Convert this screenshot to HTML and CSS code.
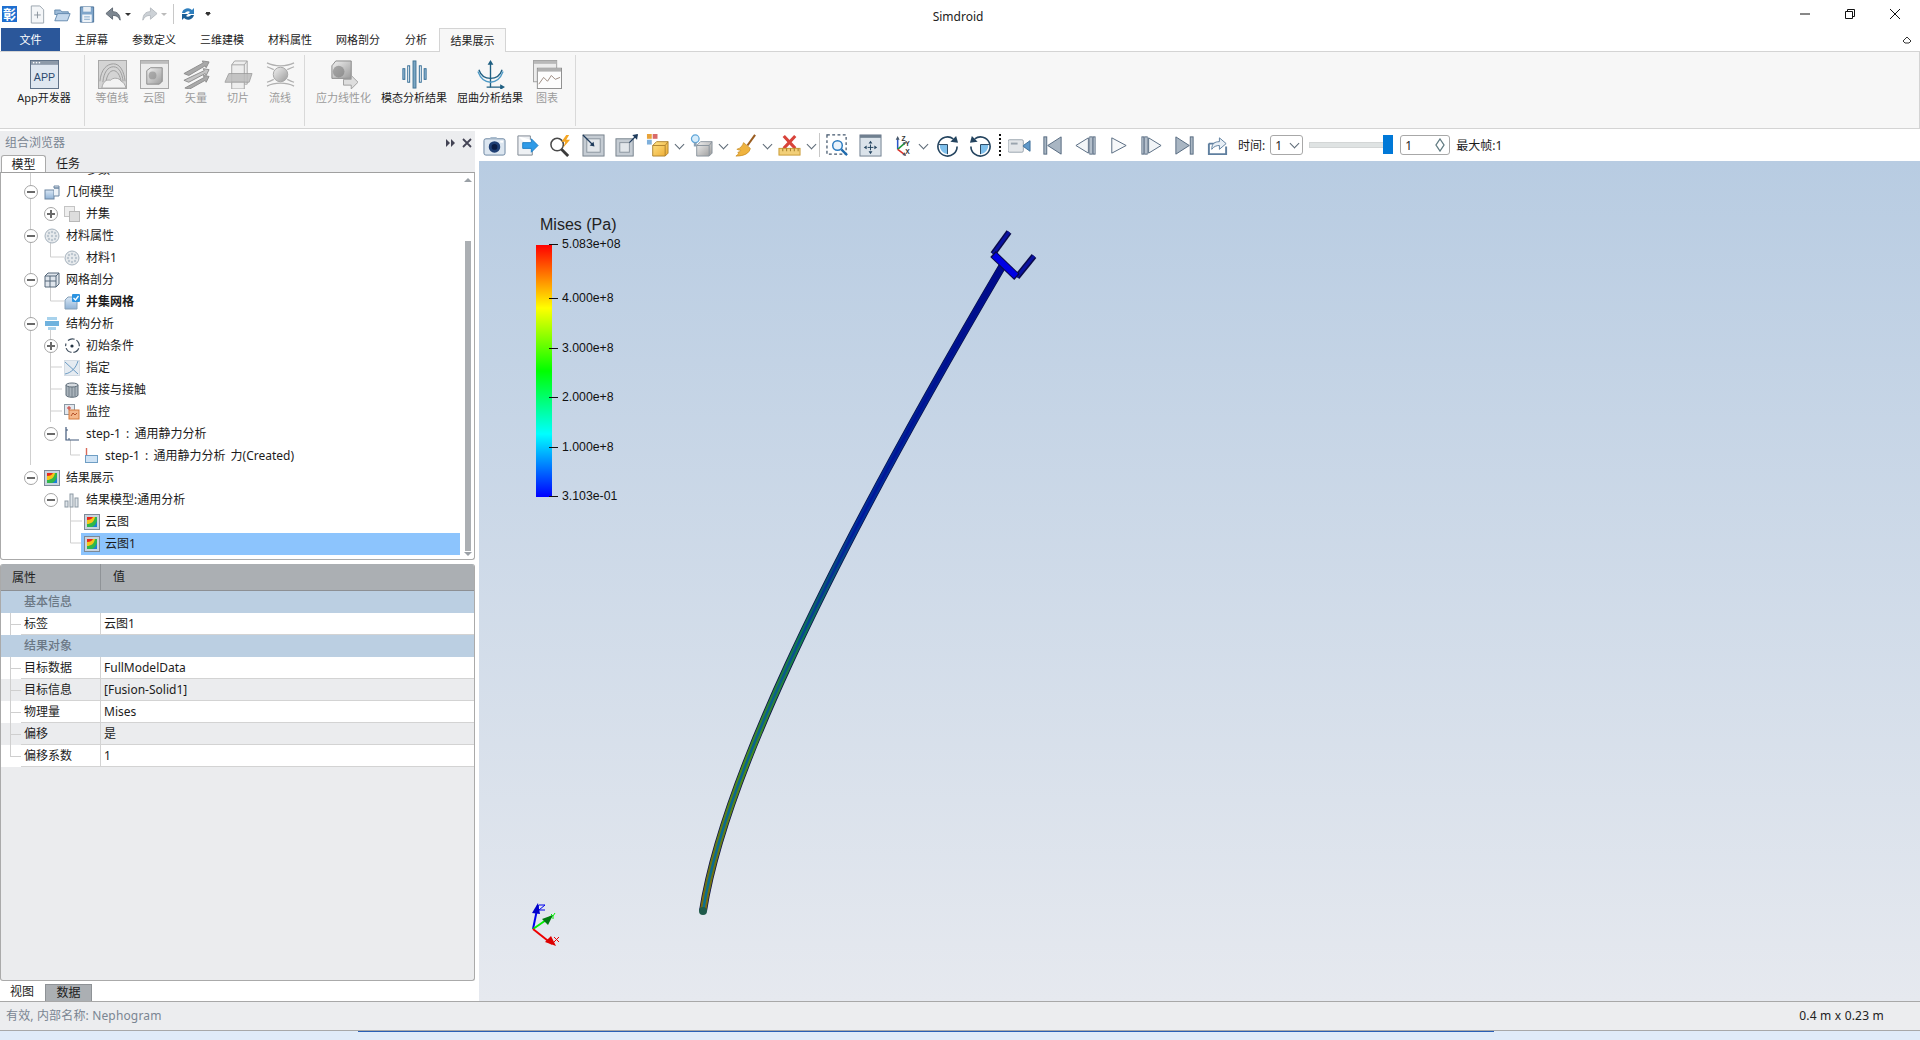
FILE: index.html
```html
<!DOCTYPE html>
<html lang="zh">
<head>
<meta charset="utf-8">
<title>Simdroid</title>
<link rel="stylesheet" href="styles.css">
</head>
<body>
<svg class="defs" xmlns="http://www.w3.org/2000/svg">
<defs>
<linearGradient id="gGrey" x1="0" y1="0" x2="1" y2="1"><stop offset="0" stop-color="#f2f2f2"/><stop offset="1" stop-color="#9a9a9a"/></linearGradient>
<linearGradient id="gBlue" x1="0" y1="0" x2="0" y2="1"><stop offset="0" stop-color="#dbe8f5"/><stop offset="1" stop-color="#8fb2d6"/></linearGradient>
<linearGradient id="gYel" x1="0" y1="0" x2="1" y2="1"><stop offset="0" stop-color="#ffe58a"/><stop offset="1" stop-color="#eda92e"/></linearGradient>
<linearGradient id="gBeam" gradientUnits="userSpaceOnUse" x1="0" y1="911" x2="0" y2="265"><stop offset="0" stop-color="#7a6a10"/><stop offset=".22" stop-color="#4a8a1c"/><stop offset=".42" stop-color="#107a50"/><stop offset=".6" stop-color="#00309a"/><stop offset="1" stop-color="#000a8a"/></linearGradient>
<linearGradient id="gBeamIn" gradientUnits="userSpaceOnUse" x1="0" y1="911" x2="0" y2="265"><stop offset="0" stop-color="#0b6f90"/><stop offset=".35" stop-color="#0a5f8a"/><stop offset=".6" stop-color="#00189e"/><stop offset="1" stop-color="#000a8a"/></linearGradient>
<linearGradient id="gRainbow" x1="0" y1="0" x2="0" y2="1"><stop offset="0" stop-color="#ff0000"/><stop offset=".25" stop-color="#ffff00"/><stop offset=".5" stop-color="#00ff00"/><stop offset=".75" stop-color="#00ffff"/><stop offset="1" stop-color="#0000ff"/></linearGradient>

<symbol id="q-new" viewBox="0 0 18 20"><path d="M3 1h9l4 4v14H3z" fill="#f4f6f8" stroke="#9aa4ae"/><path d="M9.500 7v7M6 10.500h7" stroke="#8a949e"/></symbol>
<symbol id="q-open" viewBox="0 0 20 20"><path d="M2 5h6l2 2h7v3H2z" fill="#9dbbd8" stroke="#5f86ab"/><path d="M2 17l3-8h14l-3 8z" fill="#c4d8ec" stroke="#5f86ab"/></symbol>
<symbol id="q-save" viewBox="0 0 18 20"><path d="M2 2h14v16H2z" fill="#7fa5ca" stroke="#4a7197"/><path d="M5 2h8v5H5z" fill="#e8eef4"/><path d="M4 10h10v8H4z" fill="#eef3f8"/><path d="M6 12.500h6M6 15h6" stroke="#7fa5ca"/></symbol>
<symbol id="q-undo" viewBox="0 0 18 18"><path d="M8 2L1 8l7 6v-4c4 0 6 1 8 5 0-6-3-9-8-9z" fill="#7d8791" stroke="#5d6771"/></symbol>
<symbol id="q-redo" viewBox="0 0 18 18"><path d="M10 2l7 6-7 6v-4c-4 0-6 1-8 5 0-6 3-9 8-9z" fill="#ccd1d6" stroke="#b5babf"/></symbol>
<symbol id="q-refresh" viewBox="0 0 18 18"><path d="M3 8a6 6 0 0 1 10-3l2-2v6H9l2-2a3.500 3.500 0 0 0-5 1z" fill="#2f7fbe"/><path d="M15 10a6 6 0 0 1-10 3l-2 2V9h6l-2 2a3.500 3.500 0 0 0 5-1z" fill="#1c5f96"/></symbol>

<symbol id="r-app" viewBox="0 0 30 30"><rect x=".5" y=".5" width="29" height="29" fill="#dfe7f0" stroke="#5c6f85"/><rect x="1" y="1" width="28" height="4" fill="#8d9aa9"/><rect x="3" y="2" width="1.500" height="1.500" fill="#fff"/><rect x="6" y="2" width="1.500" height="1.500" fill="#fff"/><rect x="9" y="2" width="1.500" height="1.500" fill="#fff"/><text x="15" y="22" class="apptxt">APP</text></symbol>
<symbol id="r-contour" viewBox="0 0 30 30"><rect x=".5" y=".5" width="29" height="29" fill="#d4d4d4" stroke="#a6a6a6"/><g fill="none" stroke="#9b9b9b"><path d="M2 22C3 10 9 4 16 4s11 8 12 18"/><path d="M5 23C6 13 10 7 16 7s9 7 10 15"/><path d="M8 24c1-8 4-13 8-13s7 5 8 12"/></g><path d="M4 29c1-7 5-9 9-8 2-3 9-3 11 1 3 1 4 4 5 7z" fill="#f2f2f2" stroke="#a6a6a6"/></symbol>
<symbol id="r-neph" viewBox="0 0 30 30"><rect x=".5" y=".5" width="29" height="29" fill="#ececec" stroke="#a6a6a6"/><rect x="1" y="1" width="28" height="3" fill="#bdbdbd"/><path d="M7 11l4-3h12v14l-3 3H7z" fill="url(#gGrey)" stroke="#8c8c8c"/><circle cx="13" cy="16" r="4" fill="#8a8a8a" opacity=".6"/></symbol>
<symbol id="r-vec" viewBox="0 0 30 30"><g fill="#a9a9a9" stroke="#8e8e8e"><path d="M2 14L22 3l-1-2 7 1-3 6-1-2L7 16z"/><path d="M2 21l21-10-1-2 6 1-3 6-1-2L7 23z" fill="#c4c4c4"/><path d="M3 29l20-11-1-2 6 1-3 6-1-2L8 30z"/></g></symbol>
<symbol id="r-slice" viewBox="0 0 30 30"><path d="M8 5l3-4h13v24H8z" fill="#ededed" stroke="#a6a6a6"/><path d="M8 5h13l3-4M21 5v20" fill="none" stroke="#a6a6a6"/><path d="M5 14h24l-3 9H1z" fill="#bcbcbc" opacity=".85" stroke="#989898"/><path d="M8 23h13v7H8z" fill="#ededed" stroke="#a6a6a6"/></symbol>
<symbol id="r-stream" viewBox="0 0 30 30"><circle cx="15" cy="15" r="7.500" fill="url(#gGrey)" stroke="#a6a6a6"/><g fill="none" stroke="#b0b0b0" stroke-width="1.300"><path d="M1 3c8 4 20 4 28 0"/><path d="M1 7c3 1 5 2 7 3M29 7c-3 1-5 2-7 3"/><path d="M1 27c8-4 20-4 28 0"/><path d="M1 23c3-1 5-2 7-3M29 23c-3-1-5-2-7-3"/></g></symbol>
<symbol id="r-lin" viewBox="0 0 30 30"><path d="M3 6l4-5h16v18H3z" fill="url(#gGrey)" stroke="#8a8a8a"/><circle cx="10" cy="12" r="6" fill="#777" opacity=".55"/><path d="M15 20h8v-4l7 7-7 7v-4h-8z" fill="#dedede" stroke="#a0a0a0"/></symbol>
<symbol id="r-modal" viewBox="0 0 30 30"><rect x="13.500" y="1" width="3" height="28" fill="#7aa6c4" stroke="#3f7396"/><rect x="3" y="9" width="2" height="11" fill="#a6c7de" stroke="#2f6a94"/><rect x="8" y="6" width="2" height="17" fill="#fff" stroke="#2f6a94"/><rect x="20" y="6" width="2" height="17" fill="#fff" stroke="#2f6a94"/><rect x="25" y="9" width="2" height="11" fill="#a6c7de" stroke="#2f6a94"/></symbol>
<symbol id="r-buck" viewBox="0 0 30 30"><g fill="none" stroke="#1f5f82" stroke-width="1.400"><path d="M15 4v24H28"/><path d="M11 28h4M3 10c2 6 7 9 12 9s10-3 12-9"/></g><path d="M2 12c3 8 8 11 13 11s10-3 13-11" fill="none" stroke="#4f9ac6" stroke-width="1.400"/><path d="M15 0l-3 5h6zM30 28l-5-3v6z" fill="#1f5f82"/></symbol>
<symbol id="r-chart" viewBox="0 0 30 30"><rect x=".5" y=".5" width="24" height="22" fill="#ececec" stroke="#a2a2a2"/><rect x="1" y="1" width="23" height="3" fill="#b9b9b9"/><rect x="4.500" y="8.500" width="25" height="21" fill="#fdfdfd" stroke="#8f8f8f"/><rect x="5" y="9" width="24" height="3" fill="#b0b0b0"/><path d="M6 25l5-7 4 4 4-6 4 4 5-2" fill="none" stroke="#9c8a80"/></symbol>

<symbol id="t-cam" viewBox="0 0 24 24"><rect x="1" y="5" width="22" height="17" rx="2" fill="#dce6f0" stroke="#6a84a0"/><path d="M7 5l1-2h6l1 2z" fill="#a9bbcd"/><circle cx="12" cy="13.500" r="6" fill="#1f3f74"/><circle cx="12" cy="13.500" r="3" fill="#0b1d44"/><rect x="18" y="7" width="3" height="2" fill="#fff"/></symbol>
<symbol id="t-exp" viewBox="0 0 24 24"><path d="M2 2h13v4M2 2v20h15v-5" fill="#eef1f4" stroke="#7d8791"/><path d="M7 9h9V5l7 7-7 7v-4H7z" fill="#2f9be8" stroke="#1f7fc6"/></symbol>
<symbol id="t-zf" viewBox="0 0 24 24"><circle cx="8.500" cy="11" r="6.500" fill="#fff" stroke="#4a4a4a" stroke-width="1.600"/><path d="M13 16l7 7" stroke="#3a3a3a" stroke-width="3"/><path d="M18 1l-5 7h4l-2 6 7-8h-4l3-5z" fill="#f5a623"/></symbol>
<symbol id="t-fit" viewBox="0 0 24 24"><rect x="1" y="1" width="22" height="22" fill="#c5ccd3" stroke="#76818c"/><rect x="5" y="5" width="14" height="14" fill="#e2e6ea" stroke="#8a949e"/><path d="M1 1l11 11" stroke="#1f3b5c" stroke-width="1.300"/><path d="M13 13l-5-1 4-4z" fill="#1f3b5c"/></symbol>
<symbol id="t-out" viewBox="0 0 24 24"><rect x="1" y="5" width="18" height="18" fill="#c5ccd3" stroke="#76818c"/><rect x="5" y="9" width="10" height="10" fill="#e2e6ea" stroke="#8a949e"/><path d="M15 9l8-8" stroke="#1f3b5c" stroke-width="1.300"/><path d="M24 0l-1 6-5-5z" fill="#1f3b5c"/></symbol>
<symbol id="t-cube" viewBox="0 0 24 24"><rect x="1" y="0" width="5" height="5" fill="#e8a33a"/><rect x="7" y="0" width="5" height="5" fill="#d86a6a"/><rect x="1" y="6" width="5" height="5" fill="#7fb0dc"/><path d="M7 12l4-4h12v12l-3 3H7z" fill="url(#gYel)" stroke="#b08430"/><path d="M7 12h13v11M20 12l3-4" fill="none" stroke="#b08430"/></symbol>
<symbol id="t-light" viewBox="0 0 24 24"><circle cx="5.500" cy="5" r="4" fill="#d6ecfb" stroke="#5ea5d8" stroke-width="1.300"/><rect x="4" y="9" width="3" height="4" fill="#8aa1b5"/><path d="M7 12l4-4h12v12l-3 3H7z" fill="url(#gGrey)" stroke="#8a949e"/><path d="M7 12h13v11M20 12l3-4" fill="none" stroke="#8a949e"/></symbol>
<symbol id="t-broom" viewBox="0 0 24 24"><path d="M22 1L14 12" stroke="#9a5d20" stroke-width="2.200"/><path d="M10 9l7 6c-1 5-6 8-15 8 3-2 3-3 2-4 2 0 3-1 3-2-2 0-3-1-4-1 4-1 6-4 7-7z" fill="#efb33f" stroke="#c78a1e" stroke-width=".8"/></symbol>
<symbol id="t-clear" viewBox="0 0 24 24"><path d="M6 2l12 13M18 2L6 15" stroke="#d8433a" stroke-width="3.200"/><rect x="1" y="15" width="22" height="7" fill="#f2cf78" stroke="#c99a34"/><path d="M5 15v3M9 15v3M13 15v3M17 15v3M21 15v3" stroke="#a07a24"/></symbol>
<symbol id="t-zbox" viewBox="0 0 24 24"><rect x="1" y="1" width="20" height="20" fill="none" stroke="#42566c" stroke-width="1.300" stroke-dasharray="3 2.500"/><circle cx="12" cy="12" r="5" fill="#eaf3fb" stroke="#2b7bc0" stroke-width="1.500"/><path d="M16 16l6 6" stroke="#1f6bad" stroke-width="2.400"/></symbol>
<symbol id="t-pan" viewBox="0 0 24 24"><rect x="1" y="1" width="22" height="22" fill="#dbe3ea" stroke="#6f7f8f"/><rect x="1" y="1" width="22" height="3" fill="#6f7f8f"/><path d="M12 7l-2 3h4zM12 21l-2-3h4zM5 14l3-2v4zM19 14l-3-2v4z" fill="#24445f"/><path d="M12 11v6M9 14h6" stroke="#24445f"/></symbol>
<symbol id="t-xyz" viewBox="0 0 24 24"><path d="M8 16V4" stroke="#2a55c8" stroke-width="1.600"/><path d="M8 16l8-7" stroke="#1f9a3a" stroke-width="1.600"/><path d="M8 16l8 6" stroke="#d8322a" stroke-width="1.600"/><path d="M8 2L6 6h4zM17 8l-4 1 2 2.500zM17 23l-2-4-2 3z" fill="#4a5a6a"/><text x="12" y="7" class="axtxt">Z</text><text x="16" y="12" class="axtxt">Y</text><text x="16" y="21" class="axtxt">X</text></symbol>
<symbol id="t-rot" viewBox="0 0 24 24"><path d="M18 5a10 10 0 1 0 4 8" fill="none" stroke="#24445f" stroke-width="1.700"/><path d="M23 9l-8-1 6-6z" fill="#24445f"/><path d="M4 11h8v10a9 9 0 0 1-8-10z" fill="#7fc0ec"/><path d="M3 11h9v10" fill="none" stroke="#24445f"/></symbol>
<symbol id="t-rotb" viewBox="0 0 24 24"><path d="M6 5a10 10 0 1 1-4 8" fill="none" stroke="#24445f" stroke-width="1.700"/><path d="M1 9l8-1-6-6z" fill="#24445f"/><path d="M20 11h-8v10a9 9 0 0 0 8-10z" fill="#7fc0ec"/><path d="M21 11h-9v10" fill="none" stroke="#24445f"/></symbol>
<symbol id="t-vid" viewBox="0 0 24 24"><rect x="0" y="6" width="16" height="13" rx="1.500" fill="#e3e6e9" stroke="#9aa4ae"/><rect x="3" y="9" width="7" height="2" fill="#9aa4ae"/><path d="M16 12l7-5v11l-7-5z" fill="#5f98c9" stroke="#3f6f98"/></symbol>
<symbol id="t-first" viewBox="0 0 24 24"><rect x="3" y="3" width="3" height="18" fill="#a9b6c3" stroke="#566a80"/><path d="M21 3v18L7 12z" fill="#a9b6c3" stroke="#566a80"/></symbol>
<symbol id="t-prev" viewBox="0 0 24 24"><path d="M15 4v16L2 12z" fill="#f2f5f8" stroke="#566a80"/><rect x="16.500" y="3" width="2.500" height="18" fill="#d8e0e8" stroke="#566a80"/><rect x="20" y="3" width="2" height="18" fill="#d8e0e8" stroke="#566a80"/></symbol>
<symbol id="t-play" viewBox="0 0 24 24"><path d="M5 4v16l15-8z" fill="#f6f8fa" stroke="#566a80"/></symbol>
<symbol id="t-next" viewBox="0 0 24 24"><rect x="2" y="3" width="2" height="18" fill="#d8e0e8" stroke="#566a80"/><rect x="5" y="3" width="2.500" height="18" fill="#d8e0e8" stroke="#566a80"/><path d="M9 4v16l13-8z" fill="#f2f5f8" stroke="#566a80"/></symbol>
<symbol id="t-last" viewBox="0 0 24 24"><path d="M3 3v18l14-9z" fill="#a9b6c3" stroke="#566a80"/><rect x="18" y="3" width="3" height="18" fill="#a9b6c3" stroke="#566a80"/></symbol>
<symbol id="t-share" viewBox="0 0 24 24"><path d="M3 10h7M3 10v11h18v-8" fill="none" stroke="#5f7f9f" stroke-width="2"/><path d="M6 16c0-6 3-8 8-8V4l7 6-7 6v-4c-3 0-6 1-8 4z" fill="#e7eef5" stroke="#5f7f9f"/></symbol>

<symbol id="n-geo" viewBox="0 0 16 16"><rect x="1" y="6" width="9" height="9" fill="url(#gBlue)" stroke="#6c86a2"/><path d="M10 4h5v8h-5M10 2h5v2h-5z" fill="#eef3f8" stroke="#6c86a2"/></symbol>
<symbol id="n-union" viewBox="0 0 16 16"><rect x=".5" y=".5" width="10" height="10" fill="#eee" stroke="#c4c4c4"/><rect x="5.500" y="5.500" width="10" height="10" fill="#ddd" stroke="#b8b8b8"/></symbol>
<symbol id="n-mat" viewBox="0 0 16 16"><circle cx="8" cy="8" r="7" fill="#e8ebee" stroke="#a6b2bd"/><g fill="#bcc6cf"><circle cx="5" cy="5" r="1.200"/><circle cx="8" cy="4" r="1.200"/><circle cx="11" cy="5" r="1.200"/><circle cx="4" cy="8" r="1.200"/><circle cx="8" cy="8" r="1.200"/><circle cx="12" cy="8" r="1.200"/><circle cx="5" cy="11" r="1.200"/><circle cx="8" cy="12" r="1.200"/><circle cx="11" cy="11" r="1.200"/></g></symbol>
<symbol id="n-mesh" viewBox="0 0 16 16"><path d="M1 4l3-3h11v11l-3 3H1z" fill="#dfe5ec" stroke="#56687a"/><path d="M1 4h11v11M12 4l3-3M1 9h11M6 4v11" fill="none" stroke="#56687a"/></symbol>
<symbol id="n-check" viewBox="0 0 16 16"><path d="M1 6l3-3h9v12H1z" fill="url(#gBlue)" stroke="#86a0b8"/><rect x="8" y="0" width="8" height="8" rx="1" fill="#2b93e0"/><path d="M9.500 4l2 2 3-4" fill="none" stroke="#fff" stroke-width="1.300"/></symbol>
<symbol id="n-struct" viewBox="0 0 16 16"><rect x="3" y="1" width="10" height="3" fill="#a8d2ec"/><rect x="1" y="5" width="14" height="5" fill="#6fb2de"/><rect x="4" y="11" width="8" height="3" fill="#a8d2ec"/></symbol>
<symbol id="n-init" viewBox="0 0 16 16"><path d="M4 2.500a6.800 6.800 0 1 1-2 3" fill="none" stroke="#3d4c5c" stroke-width="1.200" stroke-dasharray="7 2"/><circle cx="8" cy="8" r="1.600" fill="#243342"/></symbol>
<symbol id="n-assign" viewBox="0 0 16 16"><rect x=".5" y=".5" width="15" height="15" fill="#e5ebf1" stroke="#d4dce4"/><path d="M1 2l13 12M1 14C7 13 12 8 14 1" fill="none" stroke="#6c9cc4"/></symbol>
<symbol id="n-cyl" viewBox="0 0 16 16"><path d="M2 3v10c0 3 12 3 12 0V3z" fill="#a9b3bb" stroke="#5f6d79"/><ellipse cx="8" cy="3" rx="6" ry="2" fill="#d6dbe0" stroke="#5f6d79"/><path d="M5 5v9M8 5v10M11 5v9" stroke="#5f6d79" stroke-width=".7"/></symbol>
<symbol id="n-mon" viewBox="0 0 16 16"><rect x=".5" y=".5" width="10" height="10" fill="#e3e8ee" stroke="#8c98a4"/><rect x="5" y="6" width="10" height="9" fill="#f4b78a" stroke="#d57a3c"/><path d="M3 4h4M5 2v4" stroke="#c83a32"/><path d="M7 12l2-3 2 2 2-2" fill="none" stroke="#b5522a"/></symbol>
<symbol id="n-axis" viewBox="0 0 16 16"><path d="M2 1v13h13" fill="none" stroke="#41597a" stroke-width="1.200"/><path d="M2 4h2M5 14v-2" stroke="#41597a"/></symbol>
<symbol id="n-force" viewBox="0 0 16 16"><rect x="1.500" y="7.500" width="12" height="7" fill="#cfe3f5" stroke="#6f9ec4"/><path d="M2.500 0v7" stroke="#d86a5a" stroke-width="1.400"/></symbol>
<symbol id="n-res" viewBox="0 0 16 16"><rect x=".5" y=".5" width="15" height="15" fill="#c9d4df" stroke="#7d8a97"/><rect x="3" y="3" width="10" height="10" fill="#e8261c"/><path d="M3 13V6c3 0 5-1 6-3h4v10z" fill="#f5c518"/><path d="M3 13v-3c4 0 7-2 8-7h2v10z" fill="#2fb84a"/><path d="M8 13c3-1 4-4 5-6v6z" fill="#1c7fd6"/></symbol>
<symbol id="n-bars" viewBox="0 0 16 16"><rect x="1" y="9" width="3" height="6" fill="#dfe5ea" stroke="#8d99a4"/><rect x="6" y="2" width="3" height="13" fill="#dfe5ea" stroke="#8d99a4"/><rect x="11" y="6" width="3" height="9" fill="#dfe5ea" stroke="#8d99a4"/></symbol>
</defs>
</svg>

<div class="app">
  <header class="titlebar">
    <div class="quick">
      <span class="logo">彰</span>
      <svg class="q q1"><use href="#q-new"/></svg>
      <svg class="q"><use href="#q-open"/></svg>
      <svg class="q"><use href="#q-save"/></svg>
      <svg class="q q-u"><use href="#q-undo"/></svg><i class="caret"></i>
      <svg class="q q-r"><use href="#q-redo"/></svg><i class="caret light"></i>
      <i class="qsep"></i>
      <svg class="q q-f"><use href="#q-refresh"/></svg>
      <i class="caret bar"></i>
    </div>
    <div class="apptitle">Simdroid</div>
    <div class="winctl">
      <svg class="wc" viewBox="0 0 12 12"><path d="M1 6h10" stroke="#111" stroke-width="1"/></svg>
      <svg class="wc" viewBox="0 0 12 12"><path d="M1.500 3.500h7v7h-7zM3.500 3.500v-2h7v7h-2" fill="none" stroke="#111"/></svg>
      <svg class="wc" viewBox="0 0 12 12"><path d="M1 1l10 10M11 1L1 11" stroke="#111"/></svg>
    </div>
  </header>

  <nav class="tabs">
    <span class="tab file">文件</span>
    <span class="tab t1">主屏幕</span>
    <span class="tab t2">参数定义</span>
    <span class="tab t2">三维建模</span>
    <span class="tab t2">材料属性</span>
    <span class="tab t2">网格剖分</span>
    <span class="tab t3">分析</span>
    <span class="tab active">结果展示</span>
    <svg class="collapse" viewBox="0 0 10 10"><path d="M1 6l4-4 4 4-2 2H3z" fill="none" stroke="#333"/></svg>
  </nav>

  <section class="ribbon">
    <div class="rgroup g1">
      <div class="ritem w56"><svg class="ricon"><use href="#r-app"/></svg><span>App开发器</span></div>
    </div>
    <div class="rgroup g2">
      <div class="ritem w42 off"><svg class="ricon"><use href="#r-contour"/></svg><span>等值线</span></div>
      <div class="ritem w42 off"><svg class="ricon"><use href="#r-neph"/></svg><span>云图</span></div>
      <div class="ritem w42 off"><svg class="ricon"><use href="#r-vec"/></svg><span>矢量</span></div>
      <div class="ritem w42 off"><svg class="ricon"><use href="#r-slice"/></svg><span>切片</span></div>
      <div class="ritem w42 off"><svg class="ricon"><use href="#r-stream"/></svg><span>流线</span></div>
    </div>
    <div class="rgroup g3">
      <div class="ritem w55 off"><svg class="ricon"><use href="#r-lin"/></svg><span>应力线性化</span></div>
      <div class="ritem w66"><svg class="ricon"><use href="#r-modal"/></svg><span>模态分析结果</span></div>
      <div class="ritem w66"><svg class="ricon"><use href="#r-buck"/></svg><span>屈曲分析结果</span></div>
      <div class="ritem w28 off"><svg class="ricon"><use href="#r-chart"/></svg><span>图表</span></div>
    </div>
  </section>

  <main class="main">
    <aside class="left">
      <div class="dockhead">
        <span class="docktitle">组合浏览器</span>
        <svg class="dockbtn" viewBox="0 0 10 10"><path d="M0 1l4 4-4 4zM5 1l4 4-4 4z" fill="#445"/></svg>
        <svg class="dockbtn" viewBox="0 0 10 10"><path d="M1 1l8 8M9 1l-8 8" stroke="#445" stroke-width="1.800"/></svg>
      </div>
      <div class="dtabs">
        <span class="dtab on">模型</span>
        <span class="dtab">任务</span>
      </div>
      <div class="tree">
        <svg class="guides" viewBox="0 0 462 388">
          <path d="M30.500 0V293M50.500 69V85H64M50.500 115V129H64M50.500 157V250M50.500 195H62M50.500 217H62M50.500 239H62M70.500 268V283H80M70.500 335V371H82M70.500 349H82" fill="none" stroke="#cfcfcf"/>
        </svg>
        <div class="rows">
          <div class="tr l1 clipfirst"><i class="exsp"></i><i class="icsp"></i><span>参数</span></div>
          <div class="tr l0"><i class="ex"></i><svg class="ti"><use href="#n-geo"/></svg><span>几何模型</span></div>
          <div class="tr l1"><i class="ex plus"></i><svg class="ti"><use href="#n-union"/></svg><span>并集</span></div>
          <div class="tr l0"><i class="ex"></i><svg class="ti"><use href="#n-mat"/></svg><span>材料属性</span></div>
          <div class="tr l1"><i class="exsp"></i><svg class="ti"><use href="#n-mat"/></svg><span>材料1</span></div>
          <div class="tr l0"><i class="ex"></i><svg class="ti"><use href="#n-mesh"/></svg><span>网格剖分</span></div>
          <div class="tr l1"><i class="exsp"></i><svg class="ti"><use href="#n-check"/></svg><b>并集网格</b></div>
          <div class="tr l0"><i class="ex"></i><svg class="ti"><use href="#n-struct"/></svg><span>结构分析</span></div>
          <div class="tr l1"><i class="ex plus"></i><svg class="ti"><use href="#n-init"/></svg><span>初始条件</span></div>
          <div class="tr l1"><i class="exsp"></i><svg class="ti"><use href="#n-assign"/></svg><span>指定</span></div>
          <div class="tr l1"><i class="exsp"></i><svg class="ti"><use href="#n-cyl"/></svg><span>连接与接触</span></div>
          <div class="tr l1"><i class="exsp"></i><svg class="ti"><use href="#n-mon"/></svg><span>监控</span></div>
          <div class="tr l1"><i class="ex"></i><svg class="ti"><use href="#n-axis"/></svg><span>step-1 : 通用静力分析</span></div>
          <div class="tr l2"><svg class="ti"><use href="#n-force"/></svg><span>step-1 : 通用静力分析 力(Created)</span></div>
          <div class="tr l0"><i class="ex"></i><svg class="ti"><use href="#n-res"/></svg><span>结果展示</span></div>
          <div class="tr l1"><i class="ex"></i><svg class="ti"><use href="#n-bars"/></svg><span>结果模型:通用分析</span></div>
          <div class="tr l2"><svg class="ti"><use href="#n-res"/></svg><span>云图</span></div>
          <div class="tr l2 sel"><svg class="ti"><use href="#n-res"/></svg><span>云图1</span></div>
        </div>
        <div class="vscroll">
          <i class="arrow up"></i>
          <i class="thumb"></i>
          <i class="arrow down"></i>
        </div>
      </div>

      <div class="props">
        <div class="phead"><span class="pk">属性</span><span class="pv">值</span></div>
        <div class="pgroup">基本信息</div>
        <div class="prow"><i class="gut"></i><span class="pk">标签</span><span class="pv">云图1</span></div>
        <div class="pgroup">结果对象</div>
        <div class="prow"><i class="gut"></i><span class="pk">目标数据</span><span class="pv">FullModelData</span></div>
        <div class="prow alt"><i class="gut"></i><span class="pk">目标信息</span><span class="pv">[Fusion-Solid1]</span></div>
        <div class="prow"><i class="gut"></i><span class="pk">物理量</span><span class="pv">Mises</span></div>
        <div class="prow alt"><i class="gut"></i><span class="pk">偏移</span><span class="pv">是</span></div>
        <div class="prow last"><i class="gut"></i><span class="pk">偏移系数</span><span class="pv">1</span></div>
      </div>

      <div class="btabs">
        <span class="btab">视图</span>
        <span class="btab on">数据</span>
      </div>
    </aside>

    <section class="work">
      <div class="toolbar">
        <span class="tb"><svg class="tic"><use href="#t-cam"/></svg></span>
        <span class="tb"><svg class="tic"><use href="#t-exp"/></svg></span>
        <span class="tb"><svg class="tic"><use href="#t-zf"/></svg></span>
        <span class="tb"><svg class="tic"><use href="#t-fit"/></svg></span>
        <span class="tb"><svg class="tic"><use href="#t-out"/></svg></span>
        <span class="tb n"><svg class="tic"><use href="#t-cube"/></svg></span><i class="chev"></i>
        <span class="tb n"><svg class="tic"><use href="#t-light"/></svg></span><i class="chev"></i>
        <span class="tb n"><svg class="tic"><use href="#t-broom"/></svg></span><i class="chev"></i>
        <span class="tb n"><svg class="tic"><use href="#t-clear"/></svg></span><i class="chev"></i>
        <i class="tsep"></i>
        <span class="tb"><svg class="tic"><use href="#t-zbox"/></svg></span>
        <span class="tb"><svg class="tic"><use href="#t-pan"/></svg></span>
        <span class="tb n"><svg class="tic"><use href="#t-xyz"/></svg></span><i class="chev"></i>
        <span class="tb"><svg class="tic"><use href="#t-rot"/></svg></span>
        <span class="tb"><svg class="tic"><use href="#t-rotb"/></svg></span>
        <i class="tdots"></i>
        <span class="tb"><svg class="tic"><use href="#t-vid"/></svg></span>
        <span class="tb"><svg class="tic"><use href="#t-first"/></svg></span>
        <span class="tb"><svg class="tic"><use href="#t-prev"/></svg></span>
        <span class="tb"><svg class="tic"><use href="#t-play"/></svg></span>
        <span class="tb"><svg class="tic"><use href="#t-next"/></svg></span>
        <span class="tb"><svg class="tic"><use href="#t-last"/></svg></span>
        <span class="tb"><svg class="tic"><use href="#t-share"/></svg></span>
        <span class="tlabel">时间:</span>
        <span class="combo"><span>1</span><i class="chev inbox"></i></span>
        <span class="slider"><i class="knob"></i></span>
        <span class="spin"><span>1</span><svg class="spinic" viewBox="0 0 10 14"><path d="M5 1l4 6-4 6-4-6z" fill="none" stroke="#5f7a80" stroke-width="1.300"/></svg></span>
        <span class="tlabel maxf">最大帧:1</span>
      </div>
      <div class="viewport">
        <svg class="scene" viewBox="479 161 1441 840" xmlns="http://www.w3.org/2000/svg">
          <text x="540" y="230" class="lg-title">Mises (Pa)</text>
          <rect x="536" y="245" width="16" height="252" fill="url(#gRainbow)"/>
          <path d="M549 244.500h9M549 298.500h9M549 348.500h9M549 397.500h9M549 447.500h9M549 496.500h9" stroke="#111" stroke-width="1"/>
          <text x="562" y="248" class="lg">5.083e+08</text>
          <text x="562" y="302" class="lg">4.000e+8</text>
          <text x="562" y="352" class="lg">3.000e+8</text>
          <text x="562" y="401" class="lg">2.000e+8</text>
          <text x="562" y="451" class="lg">1.000e+8</text>
          <text x="562" y="500" class="lg">3.103e-01</text>

          <path d="M703 911C722 790 812 590 1003 265" fill="none" stroke="#0a1048" stroke-width="8"/>
          <path d="M703 911C722 790 812 590 1003 265" fill="none" stroke="url(#gBeam)" stroke-width="6.500"/>
          <path d="M703 911C722 790 812 590 1003 265" fill="none" stroke="url(#gBeamIn)" stroke-width="2.500"/>
          <circle cx="703" cy="911" r="4" fill="#1f5a4a"/>
          <path d="M1009 232L993 254" fill="none" stroke="#0a0a4a" stroke-width="6"/>
          <path d="M1009 232L993 254" fill="none" stroke="#0a12a0" stroke-width="3"/>
          <path d="M1017 277L1034 256" fill="none" stroke="#0a0a4a" stroke-width="6"/>
          <path d="M1017 277L1034 256" fill="none" stroke="#0a12a0" stroke-width="3"/>
          <path d="M993 254L1017 277" fill="none" stroke="#0a0a4a" stroke-width="8"/>
          <path d="M994 255L1016 276" fill="none" stroke="#0000e4" stroke-width="6"/>

          <path d="M533 929L538 905" stroke="#0000ee" stroke-width="2"/>
          <path d="M533 929L552 916" stroke="#00ee00" stroke-width="2"/>
          <path d="M533 929L552 944" stroke="#ee0000" stroke-width="2"/>
          <path d="M538 903l-6 10 8 1z" fill="#0000c8"/>
          <path d="M553 915l-11 4 6 6z" fill="#007a10"/>
          <path d="M556 946l-5-10-6 6z" fill="#dd0000"/>
          <path d="M539 905h6l-6 5h6" fill="none" stroke="#0000ee"/>
          <path d="M551 914l2 2 2-3M553 916v3" fill="none" stroke="#00ee00"/>
          <path d="M554 937l5 5M559 937l-5 5" stroke="#ee0000"/>
        </svg>
      </div>
    </section>
  </main>

  <footer class="status">
    <span class="stleft">有效, 内部名称: Nephogram</span>
    <span class="stright">0.4 m x 0.23 m</span>
  </footer>
  <div class="strip"><i class="stripline"></i></div>
</div>
</body>
</html>
```

FILE: styles.css
```css
* { box-sizing: border-box; }
html, body { margin: 0; padding: 0; height: 100%; overflow: hidden; background: #fff; }
body { font-family: "Noto Sans", "Noto Sans CJK SC", "Liberation Sans", sans-serif; font-size: 12px; color: #1c1c1c; }
i { display: block; font-style: normal; }
svg { display: block; }
.defs { width: 0; height: 0; }
.app { width: 1920px; height: 1040px; display: flex; flex-direction: column; }

/* title bar */
.titlebar { height: 28px; display: flex; align-items: center; position: relative; background: #fff; flex: none; }
.quick { display: flex; align-items: center; padding-left: 2px; }
.logo { width: 15px; height: 16px; background: #1f6fd0; color: #fff; font: 700 13px/16px "Noto Sans CJK SC", sans-serif; text-align: center; }
.q { width: 18px; height: 19px; margin-left: 7px; }
.q1 { margin-left: 11px; }
.q-u { margin-left: 9px; width: 17px; height: 17px; }
.q-r { margin-left: 10px; width: 17px; height: 17px; }
.q-f { margin-left: 5px; width: 18px; height: 18px; }
.caret { width: 0; height: 0; border: 3px solid transparent; border-top: 3px solid #333; border-bottom: 0; margin-left: 3px; }
.caret.light { border-top-color: #bbb; }
.caret.bar { margin-left: 8px; box-shadow: 0 -2px 0 -1px #333; }
.qsep { width: 1px; height: 20px; background: #c8c8c8; margin-left: 6px; }
.apptitle { position: absolute; left: 0; right: 0; top: 7px; text-align: center; font-size: 12px; line-height: 20px; color: #222; padding-right: 4px; }
.winctl { margin-left: auto; display: flex; gap: 33px; padding-right: 19px; }
.wc { width: 12px; height: 12px; }

/* ribbon tabs */
.tabs { height: 24px; display: flex; align-items: stretch; flex: none; border-bottom: 1px solid #d4d4d4; position: relative; font-size: 11px; padding-left: 1px; }
.tab { display: flex; align-items: center; justify-content: center; line-height: 14px; color: #222; }
.tab.file { width: 59px; background: #2b579a; color: #fff; height: 23px; }
.t1 { width: 33px; margin-left: 15px; }
.t2 { width: 44px; margin-left: 24px; }
.t3 { width: 22px; margin-left: 25px; }
.tab.active { width: 67px; margin-left: 12px; background: #f7f7f7; border: 1px solid #d4d4d4; border-bottom: 0; height: 24px; }
.collapse { position: absolute; right: 8px; top: 7px; width: 10px; height: 10px; }

/* ribbon body */
.ribbon { height: 77px; flex: none; display: flex; background: #f7f7f7; border-bottom: 1px solid #d4d4d4; border-right: 1px solid #d4d4d4; padding: 3px 0 2px; }
.rgroup { display: flex; border-right: 1px solid #d9d9d9; padding-top: 5px; }
.g1 { width: 85px; padding-left: 16px; }
.g2 { width: 220px; padding-left: 6px; }
.g3 { width: 271px; padding-left: 11px; gap: 10px; }
.ritem { display: flex; flex-direction: column; align-items: center; font-size: 11px; line-height: 16px; color: #1c1c1c; white-space: nowrap; }
.ritem.off { color: #9b9b9b; }
.ricon { width: 29px; height: 29px; margin-bottom: 1px; }
.w56 { width: 56px; } .w42 { width: 42px; } .w55 { width: 55px; } .w66 { width: 66px; } .w28 { width: 28px; }
.apptxt { font: 11px "Liberation Sans", sans-serif; fill: #2c4a6e; text-anchor: middle; }
.axtxt { font: 700 7px "Liberation Sans", sans-serif; fill: #333; }

/* main */
.main { flex: none; height: 872px; display: flex; }
.left { width: 479px; flex: none; display: flex; flex-direction: column; background: #fff; padding: 2px 4px 0 0; }
.dockhead { height: 24px; background: #ecedef; display: flex; align-items: center; padding: 0 3px 0 5px; flex: none; }
.docktitle { color: #7a8592; flex: 1; margin-top: -2px; }
.dockbtn { width: 10px; height: 10px; margin-left: 6px; }
.dtabs { height: 17px; background: #ecedef; display: flex; flex: none; }
.dtab { width: 45px; text-align: center; line-height: 17px; margin-left: 1px; }
.dtab.on { background: #fff; border: 1px solid #aaa; border-bottom: 0; border-radius: 3px 3px 0 0; }
.dtab + .dtab { margin-left: 10px; width: 24px; }

/* tree */
.tree { height: 388px; flex: none; position: relative; display: flex; overflow: hidden; background: #fff; border: 1px solid #aaa; border-top-color: #a0a0a0; border-radius: 0 0 3px 3px; }
.guides { position: absolute; left: -1px; top: -1px; width: 462px; height: 388px; }
.rows { flex: 1; min-width: 0; position: relative; }
.tr { height: 22px; display: flex; align-items: center; gap: 6px; white-space: nowrap; line-height: 16px; word-spacing: 2px; }
.tr b { font-weight: 700; }
.clipfirst { margin-top: -14px; }
.l0 { padding-left: 23px; }
.l1 { padding-left: 43px; }
.l2 { padding-left: 83px; gap: 5px; }
.tr.sel { margin-left: 80px; padding-left: 3px; margin-right: 2px; background: #8cc4fd; }
.ex { width: 14px; height: 14px; flex: none; border: 1px solid #a5a5a5; border-radius: 50%; background: #fff; position: relative; }
.ex::before { content: ""; position: absolute; left: 2px; top: 5px; width: 8px; height: 2px; background: #6a6a6a; }
.ex.plus::after { content: ""; position: absolute; left: 5px; top: 2px; width: 2px; height: 8px; background: #6a6a6a; }
.exsp { width: 14px; flex: none; }
.icsp { width: 16px; flex: none; }
.ti { width: 16px; height: 16px; flex: none; }
.vscroll { width: 12px; margin-right: 0; display: flex; flex-direction: column; align-items: center; flex: none; padding: 5px 0 3px; }
.arrow { width: 0; height: 0; border: 4px solid transparent; flex: none; }
.arrow.up { border-bottom: 4px solid #9aa0a6; border-top: 0; }
.arrow.down { border-top: 4px solid #9aa0a6; border-bottom: 0; }
.thumb { width: 6px; flex: 1; margin: 59px 0 1px; background: #abafb3; }

/* property grid */
.props { flex: none; height: 417px; margin-top: 4px; background: #ebecee; border: 1px solid #aaa; border-top: 0; border-radius: 3px; overflow: hidden; }
.phead { height: 27px; background: #abafb3; border-bottom: 1px solid #8d9094; display: flex; align-items: center; color: #222; }
.phead .pk { width: 99px; padding-left: 11px; }
.phead .pv { flex: 1; height: 100%; padding-left: 12px; border-left: 1px solid #8f9397; line-height: 25px; }
.pgroup { height: 22px; background: #bbcfe2; color: #6b7885; font-weight: 500; line-height: 22px; padding-left: 23px; }
.prow { height: 22px; display: flex; align-items: stretch; background: #fff; line-height: 21px; }
.prow.alt { background: #ebecee; }
.gut { width: 20px; flex: none; position: relative; }
.gut::before { content: ""; position: absolute; left: 9px; top: 0; bottom: 0; border-left: 1px solid #cfcfcf; }
.gut::after { content: ""; position: absolute; left: 9px; top: 11px; width: 11px; border-top: 1px solid #cfcfcf; }
.last .gut::before { bottom: 11px; }
.prow .pk { width: 79px; flex: none; padding-left: 3px; border-bottom: 1px solid #d3d3d3; }
.prow .pv { flex: 1; padding-left: 3px; border-left: 1px solid #d3d3d3; border-bottom: 1px solid #d3d3d3; }

/* bottom tabs */
.btabs { height: 17px; margin-top: 3px; display: flex; flex: none; background: #fff; }
.btab { width: 44px; text-align: center; line-height: 15px; }
.btab.on { width: 47px; background: #abafb3; border: 1px solid #8e9296; border-bottom: 0; margin-left: 1px; }

/* work area */
.work { flex: 1; min-width: 0; display: flex; flex-direction: column; }
.toolbar { height: 32px; flex: none; display: flex; align-items: center; background: #fff; white-space: nowrap; font-size: 12px; padding-right: 1px; margin-left: -1px; }
.tb { width: 33px; display: flex; justify-content: center; flex: none; }
.tb.n { width: 28px; }
.tic { width: 23px; height: 23px; }
.chev { width: 16px; height: 10px; flex: none; position: relative; }
.chev::before { content: ""; position: absolute; left: 5px; top: 1px; width: 6px; height: 6px; border-right: 1px solid #5d6a76; border-bottom: 1px solid #5d6a76; transform: rotate(45deg); }
.tsep { width: 2px; height: 24px; flex: none; border-left: 1px solid #c8c8c8; }
.tdots { width: 6px; height: 24px; flex: none; background: radial-gradient(circle, #111 0 1px, transparent 1.200px) center top / 4px 4px repeat-y; }
.tlabel { margin-left: 4px; flex: none; }
.combo { width: 33px; height: 20px; margin-left: 5px; flex: none; border: 1px solid #a8a8a8; border-radius: 3px; display: flex; align-items: center; padding-left: 4px; }
.combo span { flex: 1; }
.chev.inbox { margin-top: -2px; }
.slider { width: 84px; height: 20px; margin-left: 6px; flex: none; position: relative; }
.slider::before { content: ""; position: absolute; left: 0; right: 0; top: 7px; height: 4px; background: #dfe3e3; border: 1px solid #d3d6d6; }
.knob { position: absolute; right: 0; top: 0; width: 10px; height: 19px; background: #0078d7; }
.spin { width: 50px; height: 20px; margin-left: 7px; flex: none; border: 1px solid #a8a8a8; border-radius: 3px; display: flex; align-items: center; justify-content: space-between; padding: 0 4px; }
.spinic { width: 10px; height: 14px; }
.maxf { margin-left: 6px; }
.viewport { flex: 1; min-height: 0; background: linear-gradient(180deg, #b8cce2 0%, #e6e9ef 100%); position: relative; }
.scene { position: absolute; inset: 0; width: 1441px; height: 840px; }
.lg-title { font: 16px "Liberation Sans", sans-serif; fill: #222; }
.lg { font: 12.300px "Liberation Sans", sans-serif; fill: #111; }

/* status */
.status { height: 30px; flex: none; display: flex; align-items: center; justify-content: space-between; background: #ecedef; border-top: 1px solid #a8a8a8; border-bottom: 1px solid #a8a8a8; padding: 0 36px 2px 6px; }
.stleft { color: #7a8592; letter-spacing: .15px; }
.stright { color: #222; letter-spacing: .2px; }
.strip { flex: none; height: 9px; background: #e0ebf8; }
.stripline { height: 1px; width: 1136px; margin-left: 358px; background: #2a5fb5; }
```
